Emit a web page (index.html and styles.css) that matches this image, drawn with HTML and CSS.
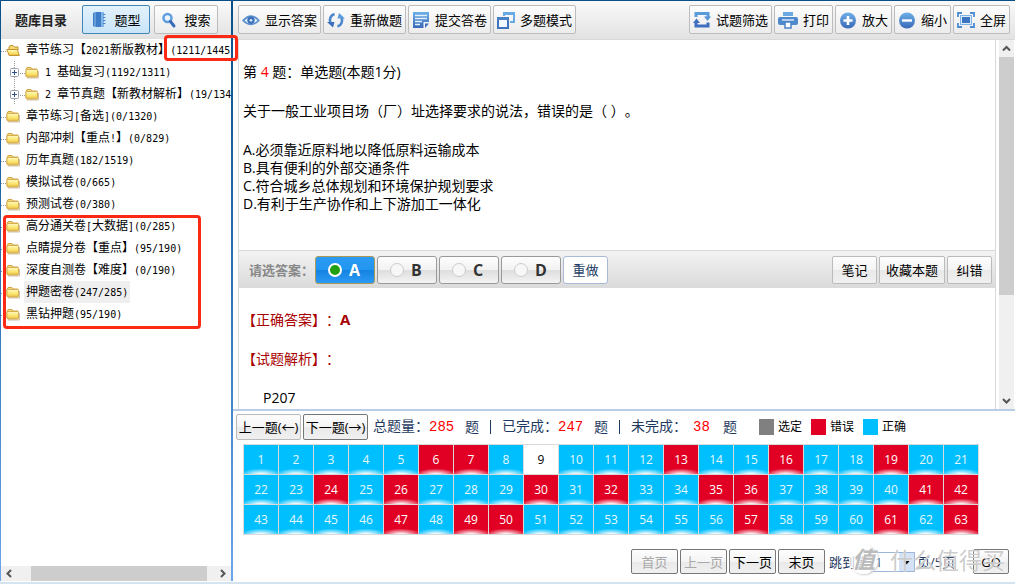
FILE: index.html
```html
<!DOCTYPE html>
<html lang="zh-CN">
<head>
<meta charset="utf-8">
<title>题库练习</title>
<link rel="stylesheet" href="styles.css">
</head>
<body>
<svg class="defs" width="0" height="0" aria-hidden="true">
  <defs>
    <linearGradient id="blue" x1="0" y1="0" x2="0" y2="1"><stop offset="0" stop-color="#6cb0e8"/><stop offset="1" stop-color="#3a68b8"/></linearGradient>
    <linearGradient id="gold" x1="0" y1="0" x2="0" y2="1"><stop offset="0" stop-color="#fff9c4"/><stop offset="0.6" stop-color="#fbe468"/><stop offset="1" stop-color="#e2b548"/></linearGradient>
    <symbol id="folder" viewBox="0 0 14 13"><path d="M1 3.500 2 1.500h4l1 1.500h5v7H1z" fill="#f3d878" stroke="#cfa64a"/><rect x="1" y="3.500" width="11.500" height="7.500" rx="1" fill="url(#gold)" stroke="#d8ae50"/><path d="M2 12h11.500V5" fill="none" stroke="#a08a58" stroke-opacity=".5"/></symbol>
    <symbol id="folder-open" viewBox="0 0 14 13"><path d="M3 11V3l1-1.500h3L8.500 3H12v3" fill="#f6d970" stroke="#b98e35"/><path d="M.8 5.500h10.500l2 6H3.200z" fill="url(#gold)" stroke="#c4932f"/></symbol>
    <symbol id="plus" viewBox="0 0 9 9"><rect x=".5" y=".5" width="8" height="8" rx="1" fill="#fff" stroke="#98a0ac"/><path d="M2 4.500h5M4.500 2v5" stroke="#2f4f8f"/></symbol>
  </defs>
</svg>
<div class="app">
  <aside class="side">
    <header class="bar side-bar">
      <h1>题库目录</h1>
      <button class="tool tab active" type="button"><svg width="16" height="18" viewBox="0 0 16 18"><path d="M2 2 4 1h9v15H4l-2-1z" fill="#3f7cc8"/><path d="M4 1v15" stroke="#8dbcf0"/><path d="M10 1h3v15h-3z" fill="#80b4e6"/><path d="M12 3.500h2.500M12 6.500h2.500M12 9.500h2.500M12 12.500h2.500" stroke="#4a86ca"/></svg>题型</button>
      <button class="tool tab search" type="button"><svg width="16" height="18" viewBox="0 0 16 18"><circle cx="6.500" cy="7" r="4" fill="#edf6ff" stroke="#5f9fe0" stroke-width="2.500"/><path d="m9.500 10.500 3.500 4.500" stroke="#3a6cb8" stroke-width="3" stroke-linecap="round"/></svg>搜索</button>
    </header>
    <ul class="tree">
      <li><svg class="folder"><use href="#folder-open"/></svg><a href="#">章节练习【<b>2021</b>新版教材】<b>(1211/1445</b></a></li>
      <li class="child"><svg class="plus"><use href="#plus"/></svg><svg class="folder"><use href="#folder"/></svg><a href="#"><b>1&nbsp;</b>基础复习<b>(1192/1311)</b></a></li>
      <li class="child"><svg class="plus"><use href="#plus"/></svg><svg class="folder"><use href="#folder"/></svg><a href="#"><b>2&nbsp;</b>章节真题【新教材解析】<b>(19/134</b></a></li>
      <li><svg class="folder"><use href="#folder"/></svg><a href="#">章节练习<b>[</b>备选<b>](0/1320)</b></a></li>
      <li><svg class="folder"><use href="#folder"/></svg><a href="#">内部冲刺【重点<b>!</b>】<b>(0/829)</b></a></li>
      <li><svg class="folder"><use href="#folder"/></svg><a href="#">历年真题<b>(182/1519)</b></a></li>
      <li><svg class="folder"><use href="#folder"/></svg><a href="#">模拟试卷<b>(0/665)</b></a></li>
      <li><svg class="folder"><use href="#folder"/></svg><a href="#">预测试卷<b>(0/380)</b></a></li>
      <li><svg class="folder"><use href="#folder"/></svg><a href="#">高分通关卷<b>[</b>大数据<b>](0/285)</b></a></li>
      <li><svg class="folder"><use href="#folder"/></svg><a href="#">点睛提分卷【重点】<b>(95/190)</b></a></li>
      <li><svg class="folder"><use href="#folder"/></svg><a href="#">深度自测卷【难度】<b>(0/190)</b></a></li>
      <li><svg class="folder"><use href="#folder"/></svg><a class="current" href="#">押题密卷<b>(247/285)</b></a></li>
      <li><svg class="folder"><use href="#folder"/></svg><a href="#">黑钻押题<b>(95/190)</b></a></li>
    </ul>
    <div class="hscroll">
      <svg width="16" height="15" viewBox="0 0 16 15"><path d="M10 4 6.500 7.500 10 11" fill="none" stroke="#555" stroke-width="2"/></svg>
      <span class="htrack"><span class="hthumb"></span></span>
      <svg width="16" height="15" viewBox="0 0 16 15"><path d="M6 4l3.500 3.500L6 11" fill="none" stroke="#555" stroke-width="2"/></svg>
    </div>
    <span class="mark mark-total"></span>
    <span class="mark mark-group"></span>
  </aside>

  <main class="main">
    <header class="bar main-bar">
      <button class="tool" type="button"><svg width="18" height="18" viewBox="0 0 18 18"><path d="M0 9.500Q9-1 18 9.500 9 19 0 9.500z" fill="#5b91cf"/><path d="M2.500 9.500Q9 2.500 15.500 9.500 9 16 2.500 9.500z" fill="#eaf3fc"/><circle cx="9" cy="9.300" r="3.700" fill="#3d72bb"/><circle cx="9" cy="9.300" r="1.400" fill="#cfe3f7"/></svg>显示答案</button>
      <button class="tool" type="button"><svg width="18" height="18" viewBox="0 0 18 18"><path d="M7.500 3A6.500 6.500 0 0 0 3.500 12" fill="none" stroke="#4b86cc" stroke-width="2.600"/><path d="M0 11h7.500L6 16.500z" fill="#3d6fbe"/><path d="M10.500 15.500A6.500 6.500 0 0 0 14.500 6.500" fill="none" stroke="#4b86cc" stroke-width="2.600"/><path d="M10.500 7.500H18L12 2z" fill="#5c9cdb"/></svg>重新做题</button>
      <button class="tool" type="button"><svg width="18" height="18" viewBox="0 0 18 18"><path d="M1 1h16v10h-5.500v6H1z" fill="url(#blue)"/><path d="M3 4.500h12M3 7.500h12M3 10.500h7M3 13.500h5" stroke="#e4f0fc" stroke-width="1.300"/><path d="M13 12.500h4L13 17z" fill="#3e6ebd"/></svg>提交答卷</button>
      <button class="tool" type="button"><svg width="18" height="18" viewBox="0 0 18 18"><path d="M7 5V2h10v9h-4" fill="none" stroke="#69aae4" stroke-width="2"/><path d="M6 1h12v3H6z" fill="#69aae4"/><rect x="1" y="7" width="10" height="10" fill="#f2f8ff" stroke="#4173bd" stroke-width="2"/><path d="M0 6h12v3H0z" fill="#4a80c6"/></svg>多题模式</button>
      <span class="spacer"></span>
      <button class="tool" type="button"><svg width="18" height="18" viewBox="0 0 18 18"><path d="M3 6V2.500h12V6" fill="none" stroke="#5a9bdb" stroke-width="3"/><path d="M11 5.500h7L14.500 10z" fill="#5a94d8"/><path d="M15 11.500V15H3v-3.500" fill="none" stroke="#3e6fbe" stroke-width="3"/><path d="M0 12h7L3.500 7.500z" fill="#3e6fbe"/></svg>试题筛选</button>
      <button class="tool" type="button"><svg width="20" height="18" viewBox="0 0 20 18"><path d="M5 1h10v4H5z" fill="#6aa9e2"/><rect x="0" y="6" width="20" height="8" rx="2" fill="#5088cc"/><path d="M4 9h12" stroke="#d7e9fa" stroke-width="1.500"/><rect x="7" y="11" width="6" height="6" fill="#fff" stroke="#4b82c8" stroke-width="1.500"/></svg>打印</button>
      <button class="tool" type="button"><svg width="18" height="18" viewBox="0 0 18 18"><circle cx="9" cy="9.500" r="8" fill="url(#blue)"/><path d="M4.500 9.500h9M9 5v9" stroke="#fff" stroke-width="2.600"/></svg>放大</button>
      <button class="tool" type="button"><svg width="18" height="18" viewBox="0 0 18 18"><circle cx="9" cy="9.500" r="8" fill="url(#blue)"/><path d="M4 9.500h10" stroke="#fff" stroke-width="2.400"/></svg>缩小</button>
      <button class="tool" type="button"><svg width="18" height="18" viewBox="0 0 18 18"><path d="M1 6V2h4M13 2h4v4M17 12v4h-4M5 16H1v-4" fill="none" stroke="#4e8bd0" stroke-width="1.800"/><rect x="3.500" y="4.500" width="11" height="9" fill="#dcebfa" stroke="#7fb3e6"/><rect x="5" y="6" width="8" height="6" fill="#3c74c0"/></svg>全屏</button>
    </header>

    <section class="viewer">
      <div class="paper">
        <div class="question">
          <p>第 <span class="num">4</span> 题：单选题(本题1分)</p>
          <p>关于一般工业项目场（厂）址选择要求的说法，错误的是（ ）。</p>
          <ul class="options">
            <li>A.必须靠近原料地以降低原料运输成本</li>
            <li>B.具有便利的外部交通条件</li>
            <li>C.符合城乡总体规划和环境保护规划要求</li>
            <li>D.有利于生产协作和上下游加工一体化</li>
          </ul>
        </div>
        <form class="answer">
          <span class="prompt">请选答案：</span>
          <label class="choice"><input type="radio" name="ans" checked>A</label>
          <label class="choice"><input type="radio" name="ans">B</label>
          <label class="choice"><input type="radio" name="ans">C</label>
          <label class="choice"><input type="radio" name="ans">D</label>
          <button class="redo" type="reset">重做</button>
          <span class="spacer"></span>
          <button class="plain" type="button">笔记</button>
          <button class="plain" type="button">收藏本题</button>
          <button class="plain" type="button">纠错</button>
        </form>
        <div class="explain">
          <p class="red">【正确答案】：<strong>A</strong></p>
          <p class="red">【试题解析】：</p>
          <p class="ref">P207</p>
        </div>
      </div>
      <div class="vscroll">
        <svg width="15" height="17" viewBox="0 0 15 17"><path d="M4 10.500 7.500 7l3.500 3.500" fill="none" stroke="#555" stroke-width="2"/></svg>
        <span class="vtrack"><span class="vthumb"></span></span>
        <svg width="15" height="17" viewBox="0 0 15 17"><path d="M4 7l3.500 3.500L11 7" fill="none" stroke="#555" stroke-width="2"/></svg>
      </div>
    </section>

    <section class="sheet">
      <div class="status">
        <button class="plain step" type="button">上一题(←)</button>
        <button class="plain step dark" type="button">下一题(→)</button>
        <p class="stats"><span>总题量：<i>285</i></span><span>题</span><span class="bar-sep"></span><span>已完成：<i>247</i></span><span>题</span><span class="bar-sep"></span><span>未完成：<i class="left">38</i></span><span>题</span></p>
        <ul class="legend"><li class="k-sel">选定</li><li class="k-bad">错误</li><li class="k-ok">正确</li></ul>
      </div>
      <div class="cells">
        <button>1</button><button>2</button><button>3</button><button>4</button><button>5</button><button class="bad">6</button><button class="bad">7</button><button>8</button><button class="todo">9</button><button>10</button><button>11</button><button>12</button><button class="bad">13</button><button>14</button><button>15</button><button class="bad">16</button><button>17</button><button>18</button><button class="bad">19</button><button>20</button><button>21</button>
        <button>22</button><button>23</button><button class="bad">24</button><button>25</button><button class="bad">26</button><button>27</button><button>28</button><button>29</button><button class="bad">30</button><button>31</button><button class="bad">32</button><button>33</button><button>34</button><button class="bad">35</button><button class="bad">36</button><button>37</button><button>38</button><button>39</button><button>40</button><button class="bad">41</button><button class="bad">42</button>
        <button>43</button><button>44</button><button>45</button><button>46</button><button class="bad">47</button><button>48</button><button class="bad">49</button><button class="bad">50</button><button>51</button><button>52</button><button>53</button><button>54</button><button>55</button><button>56</button><button class="bad">57</button><button>58</button><button>59</button><button>60</button><button class="bad">61</button><button>62</button><button class="bad">63</button>
      </div>
      <form class="pager">
        <button class="plain dark" type="button" disabled>首页</button>
        <button class="plain dark" type="button" disabled>上一页</button>
        <button class="plain dark" type="button">下一页</button>
        <button class="plain dark" type="button">末页</button>
        <label for="page">跳到第</label>
        <span class="combo"><select id="page"><option>1</option><option>2</option><option>3</option><option>4</option><option>5</option></select><svg width="15" height="18" viewBox="0 0 15 18"><rect width="15" height="18" fill="#d5e2f5"/><path d="M4.500 8h6l-3 3.500z" fill="#000"/></svg></span>
        <span class="pages">页/5页</span>
        <button class="plain dark go" type="button">GO</button>
        <div class="watermark"><span class="seal">值</span><span>什么值得买</span></div>
      </form>
    </section>
  </main>
</div>
</body>
</html>
```
FILE: styles.css
```css
* { box-sizing: border-box; }
body {
  margin: 0;
  font: 13px/18px "Open Sans", "Noto Sans CJK SC", sans-serif;
  text-spacing-trim: space-all;
  color: #000;
  background: #fff;
}
.defs { position: absolute; }
p, ul, h1 { margin: 0; padding: 0; }
ul { list-style: none; }
button, select, input { font: inherit; margin: 0; }
.spacer { flex: 1; }

.app {
  display: grid;
  grid-template-columns: 233px minmax(0, 1fr);
  height: 100vh;
  min-height: 560px;
  border-top: 1px solid #0b4f8a;
  border-bottom: 2px solid #d3e3f0;
  padding-bottom: 1px;
}
.side {
  position: relative;
  display: flex;
  flex-direction: column;
  min-height: 0;
  padding: 0 2px 0 1px;
  background: linear-gradient(#0b4f8a, #2f72b6 50%, #6aa5ee);
}
.bar {
  display: flex;
  align-items: center;
  flex: none;
  height: 39px;
  padding-bottom: 1px;
  background: linear-gradient(#fafafa, #e2e2e2);
  border-bottom: 1px solid #d8d8d8;
}
.side-bar { height: 38px; padding-bottom: 0; padding-left: 14px; border-bottom-color: #e2e2e2; }
.side-bar h1 { width: 67px; font-size: 13px; line-height: 18px; color: #222; }
.main-bar { gap: 2px; padding-right: 5px; padding-left: 5px; }

.tool {
  display: flex;
  align-items: center;
  justify-content: center;
  gap: 5px;
  height: 29px;
  padding: 0 3px;
  white-space: nowrap;
  color: #000;
  border: 1px solid #bcbcbc;
  border-radius: 2px;
  background: linear-gradient(#fdfdfd, #f4f4f4 50%, #ececec);
}
.tool svg { flex: none; }
.tab { width: 68px; gap: 7px; margin-right: 4px; }
.tab.search { width: 64px; }
.tab.active { border-color: #3f87b9; background: linear-gradient(#e3f2fc, #c9e4f8); }

.tree {
  flex: 1;
  min-height: 0;
  overflow: hidden;
  background: #fff;
  font-size: 12px;
}
.tree li {
  display: flex;
  align-items: center;
  height: 22px;
  white-space: nowrap;
  background: repeating-linear-gradient(90deg, #999 0 1px, transparent 1px 2px) 0 12px / 6px 1px no-repeat;
}
.tree li.child {
  padding-left: 9px;
  background:
    repeating-linear-gradient(90deg, #999 0 1px, transparent 1px 2px) 19px 12px / 5px 1px no-repeat,
    repeating-linear-gradient(#999 0 1px, transparent 1px 2px) 13px 0 / 1px 22px no-repeat;
}
.tree .folder { flex: none; width: 14px; height: 13px; margin: 0 4px 0 5px; }
.tree .plus { flex: none; width: 9px; height: 9px; }
.tree .child .folder { margin-left: 6px; }
.tree a {
  padding: 0 2px;
  line-height: 22px;
  color: #000;
  text-decoration: none;
}
.tree a.current { background: #efefef; }
.tree b { font: 10px/12px "DejaVu Sans Mono", monospace; }

.hscroll { display: flex; flex: none; height: 15px; background: #f0f0f0; }
.htrack { flex: 1; padding: 0 8px 0 14px; }
.hthumb { display: block; height: 15px; background: #cdcdcd; }

.mark { position: absolute; border: 3px solid #fc2a14; border-radius: 4px; z-index: 2; }
.mark-total { left: 164px; top: 34px; width: 74px; height: 26px; }
.mark-group { left: 3px; top: 214px; width: 198px; height: 114px; }

.main { display: flex; flex-direction: column; min-width: 0; min-height: 0; }
.viewer { display: flex; flex: 1; min-height: 0; padding: 0 1px 0 5px; gap: 3px; border-bottom: 2px solid #b9cde5; }
.paper {
  flex: 1;
  min-width: 0;
  overflow: hidden;
  border: solid #d9d9d9;
  border-width: 0 1px;
  font-size: 14px;
}
.question { display: grid; gap: 21px; padding: 23px 4px 37px; }
.num { color: #f00; }
.answer {
  display: flex;
  align-items: center;
  gap: 2px;
  height: 38px;
  padding: 0 3px 0 10px;
  font-size: 13px;
  border-top: 1px solid #d8d8d8;
  background: linear-gradient(#f3f3f3, #dadada);
}
.prompt { width: 64px; font-weight: bold; color: #888; white-space: nowrap; }
.choice {
  display: flex;
  align-items: center;
  gap: 7px;
  width: 60px;
  height: 28px;
  padding-left: 12px;
  font-size: 16px;
  font-weight: bold;
  color: #333;
  border: 1px solid #999;
  border-radius: 3px;
  background: linear-gradient(#fdfdfd, #f2f2f2 50%, #dedede 52%, #f4f4f4);
}
.choice input {
  appearance: none;
  width: 14px;
  height: 14px;
  border: 1px solid #ccc;
  border-radius: 50%;
  background: #f7f7f7;
}
.choice:has(:checked) {
  color: #fff;
  border-color: #a99a5c;
  background: linear-gradient(#2b9af3, #2196f0 50%, #1583e2 52%, #2b9af3);
}
.choice input:checked { border: 2px solid #fff; background: #22a012; }
.redo, .plain {
  height: 28px;
  padding: 0 6px;
  white-space: nowrap;
  border: 1px solid #bbb;
  border-radius: 2px;
  background: linear-gradient(#fdfdfd, #f4f4f4 50%, #e9e9e9 51%, #f0f0f0);
  color: #000;
}
.redo, .answer .plain { min-width: 45px; }
.redo { color: #1f3f66; background: #fff; border-color: #a9bad6; border-radius: 3px; }
.explain { display: grid; gap: 21px; padding: 22px 3px 0; }
.red { color: #a80000; }
.red strong { font-size: 15px; line-height: 18px; }
.ref { padding-left: 21px; }

.vscroll { display: flex; flex-direction: column; width: 15px; background: #f0f0f0; }
.vtrack { flex: 1; }
.vthumb { display: block; height: 71%; background: #cdcdcd; }
.vscroll svg { flex: none; }

.sheet { flex: none; padding: 3px 6px 7px 3px; }
.status { display: flex; align-items: center; gap: 2px; height: 26px; }
.step { width: 65px; height: 26px; padding: 0; }
.plain.dark { border-color: #777; }
.stats { display: flex; align-items: center; gap: 11px; margin-left: 3px; font-size: 14px; color: #1f3a5f; white-space: nowrap; }
.stats span:nth-child(3n + 1) { width: 81px; display: flex; }
.stats i { font: 14px/20px "Liberation Mono", monospace; color: #f00; }
.stats .left { margin-left: 6px; }
.stats .bar-sep { width: 1px; height: 14px; background: #1f3a5f; }
.legend { display: flex; gap: 9px; margin-left: 20px; font-size: 12px; }
.legend li { display: flex; align-items: center; gap: 4px; white-space: nowrap; }
.legend li::before { content: ""; width: 15px; height: 16px; background: #808080; }
.legend .k-bad::before { background: #e10023; }
.legend .k-ok::before { background: #00bfff; }

.cells {
  display: grid;
  width: max-content;
  grid-template-columns: repeat(21, 34px);
  gap: 1px;
  margin: 4px 0 0 7px;
  padding: 1px;
  background: #dadada;
}
.cells button {
  height: 29px;
  padding: 0;
  font-size: 12px;
  color: #e6f8ff;
  border: 0;
  background: radial-gradient(ellipse 62% 22% at 50% 103%, #fff 15%, transparent), #00bfff;
}
.cells .bad { color: #fff; background: radial-gradient(ellipse 62% 22% at 50% 103%, #fff 15%, transparent), #e10023; }
.cells .todo { color: #000; background: #fff; }

.pager { position: relative; display: flex; align-items: center; justify-content: flex-end; gap: 2px; margin-top: 14px; white-space: nowrap; }
.pager .plain { width: 47px; height: 25px; padding: 0; }
.pager .plain:disabled { color: #a8a8a8; }
.pager label { margin-left: 2px; color: #1f3a5f; }
.combo { position: relative; width: 45px; height: 20px; }
.combo select { appearance: none; width: 100%; height: 20px; padding: 0 4px; line-height: 18px; color: #1f3a5f; background: #fff; border: 1px solid #9cb6da; border-radius: 0; }
.combo svg { position: absolute; right: 1px; top: 1px; pointer-events: none; }
.pages { width: 54px; color: #1f3a5f; }
.pager .go { width: 36px; }
.watermark {
  position: absolute;
  right: 4px;
  bottom: 0;
  display: flex;
  align-items: center;
  gap: 12px;
  font-size: 23px;
  line-height: 28px;
  color: rgba(190, 190, 190, .8);
  text-shadow: 0 0 1px #fff;
  pointer-events: none;
}
.seal { width: 29px; height: 29px; text-align: center; font-weight: bold; font-style: italic; color: #bbb; background: rgba(255, 255, 255, .7); border-radius: 50%; box-shadow: 1px 1px 2px #ccc; }
```
